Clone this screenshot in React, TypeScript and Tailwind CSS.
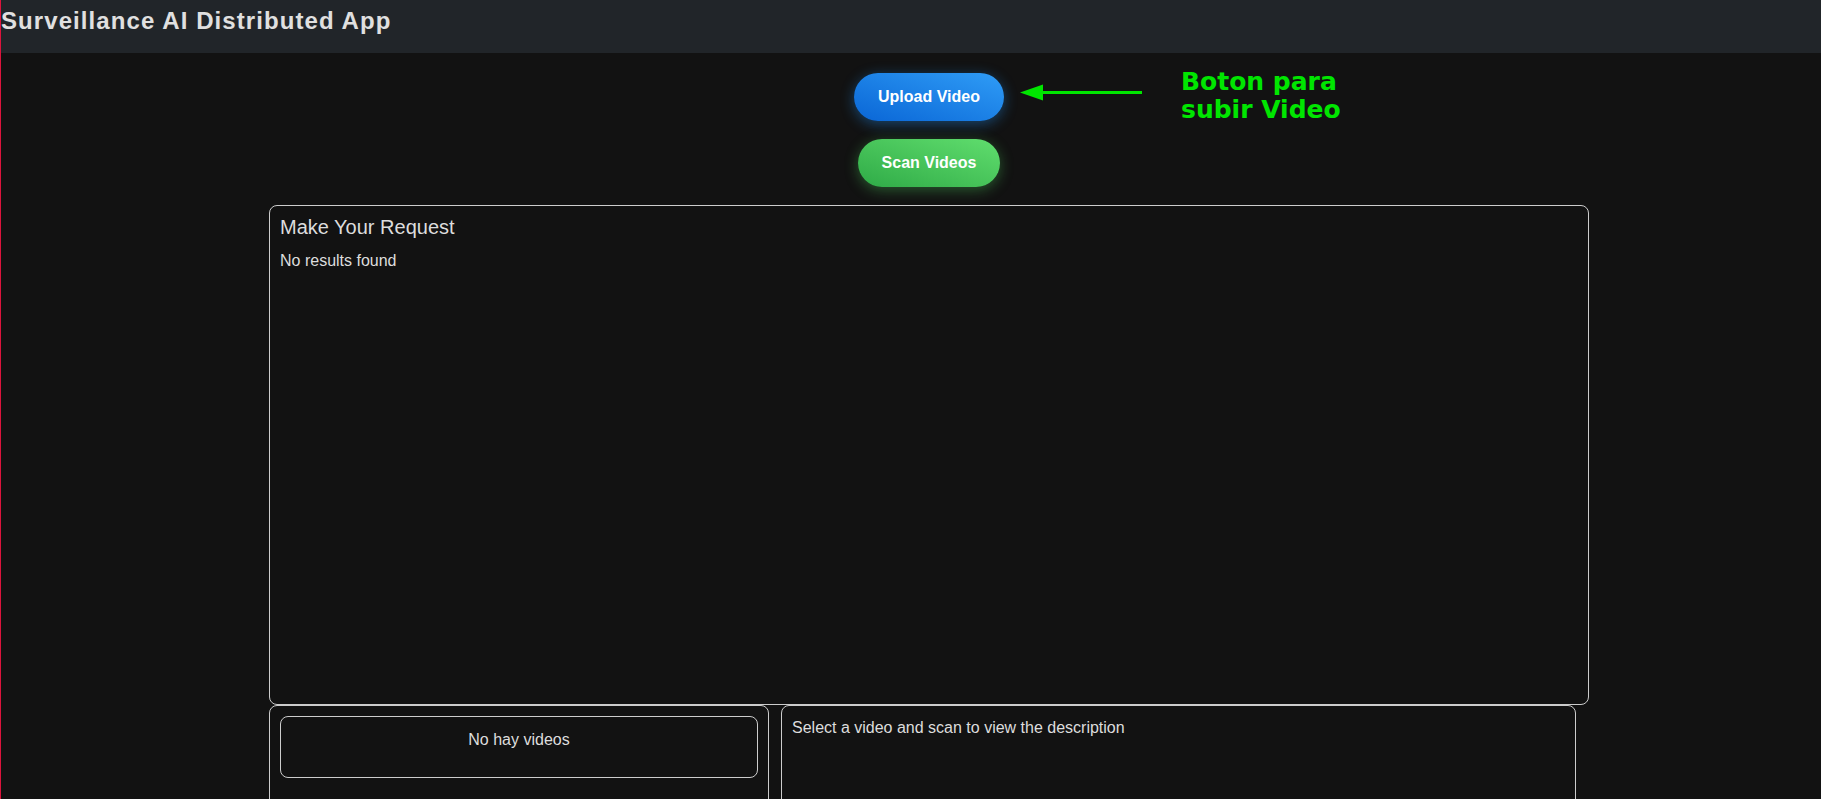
export default function App() {
  return (
    <div className="h-screen overflow-hidden bg-[#121212] border-l border-[#dc143c] font-['Liberation_Sans',Arial,sans-serif]">
      <header className="h-[53px] bg-[#212529] pt-[5px]">
        <h1 className="text-2xl font-bold tracking-[1.08px] text-[#e0e0e0]">Surveillance AI Distributed App</h1>
      </header>

      <main className="relative flex flex-col items-center pl-[36px] pt-[20px]">
        <button className="h-12 px-6 rounded-full bg-gradient-to-tr from-[#0a66d6] to-[#2f9cf6] text-base font-bold text-white shadow-[0_3px_14px_rgba(30,136,229,0.45)]">
          Upload Video
        </button>
        <button className="mt-[18px] h-12 px-6 rounded-full bg-gradient-to-tr from-[#2eab47] to-[#60de6e] text-base font-bold text-white shadow-[0_3px_14px_rgba(76,200,90,0.4)]">
          Scan Videos
        </button>

        <section className="mt-[18px] w-[1320px] h-[500px] shrink-0 border border-[#cccccc] rounded-lg p-[10px] text-[#dddddd]">
          <h2 className="text-[20px] leading-[23px]">Make Your Request</h2>
          <p className="mt-[10px] text-base leading-6">No results found</p>
        </section>

        <div className="w-[1320px] flex gap-[12px]">
          <div className="w-[500px] h-[300px] border border-[#cccccc] rounded-lg p-[10px]">
            <div className="h-[62px] border border-[#cccccc] rounded-lg pt-[11px] text-center text-base leading-6 text-[#dddddd]">
              No hay videos
            </div>
          </div>
          <div className="w-[795px] h-[300px] border border-[#cccccc] rounded-lg p-[10px] text-base leading-6 text-[#dddddd]">
            Select a video and scan to view the description
          </div>
        </div>

        {/* annotation over the screenshot */}
        <svg className="absolute left-[1019px] top-[31px]" width="122" height="17" viewBox="0 0 122 17">
          <polygon points="0,8.5 23,0.5 23,16.5" fill="#00e600" />
          <line x1="20" y1="8.5" x2="122" y2="8.5" stroke="#00e600" strokeWidth="3" />
        </svg>
        <div className="absolute left-[1180px] top-[15px] font-['DejaVu_Sans',sans-serif] font-bold text-[25px] leading-[27.5px] text-[#00e600]">
          Boton para
          <br />
          subir Video
        </div>
      </main>
    </div>
  );
}
